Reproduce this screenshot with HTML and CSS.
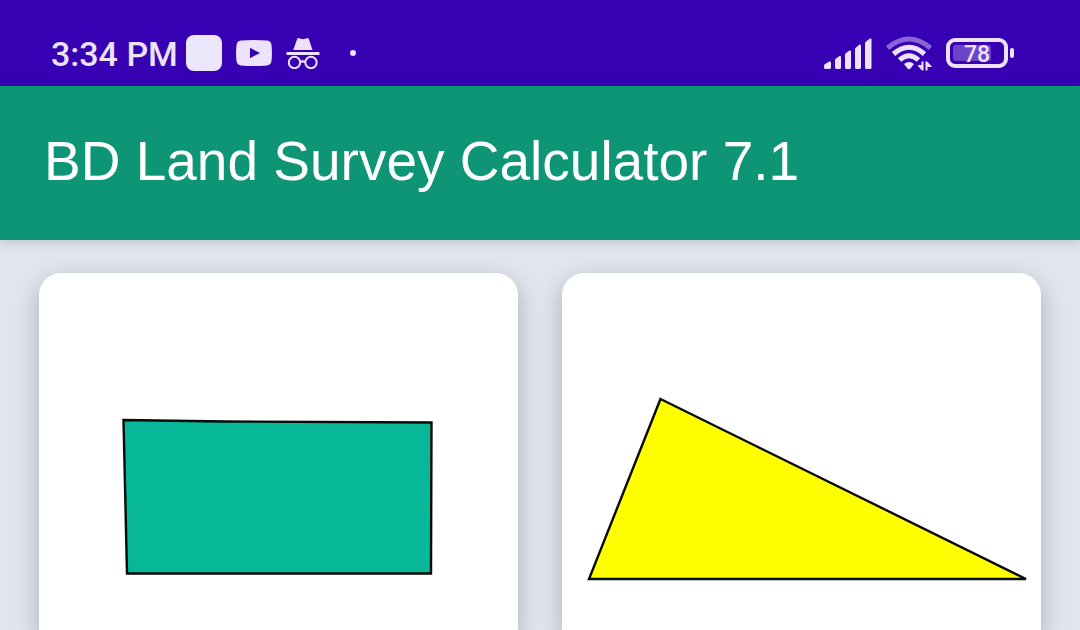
FILE: index.html
```html
<!DOCTYPE html>
<html lang="en">
<head>
<meta charset="utf-8">
<meta name="viewport" content="width=device-width, initial-scale=1">
<title>BD Land Survey Calculator</title>
<link rel="stylesheet" href="styles.css">
</head>
<body>
<div class="status-bar">
  <div class="status-left">
    <time class="clock">3:34 PM</time>
    <div class="notifications">
      <span class="app-tile"></span>
      <svg class="icon" width="36" height="26" viewBox="0 0 36 26" aria-hidden="true">
        <path fill-rule="evenodd" d="M5 .6Q18-.5 31 .6Q35 1 35.500 5Q36.400 13 35.500 21Q35 25 31 25.400Q18 26.500 5 25.400Q1 25 .5 21Q-.4 13 .5 5Q1 1 5 .6ZM14 7.800V18.200L24 13Z"/>
      </svg>
      <svg class="icon" width="34" height="32" viewBox="0 0 34 32" aria-hidden="true">
        <path d="M11 2.500Q11.500 .8 13 1.200L17 2.200L21 1.200Q22.500 .8 23 2.500L26.500 13H7.200Z"/>
        <path d="M.5 15H33.500V18H.5Z"/>
        <g class="line"><circle cx="8.500" cy="25.500" r="5.700"/><circle cx="25" cy="25.500" r="5.700"/><path d="M14 25.500Q16.700 23.200 19.500 25.500"/></g>
      </svg>
      <span class="more-dot"></span>
    </div>
  </div>
  <div class="status-right">
    <svg class="icon" width="48" height="32" viewBox="0 0 48 32" aria-hidden="true">
      <path d="M0 28.500Q0 27.500 1 27L5.500 24.500Q7 24 7 25.500V30.500Q7 32 5.500 32H1.500Q0 32 0 30.500ZM11 23Q11 22 12 21.500L15.500 19Q17 18.500 17 20V30.500Q17 32 15.500 32H12.500Q11 32 11 30.500ZM21 17.500Q21 16.500 22 16L25.500 13.500Q27 13 27 14.500V30.500Q27 32 25.500 32H22.500Q21 32 21 30.500ZM31 12Q31 11 32 10.500L35.500 7.500Q37 7 37 8.500V30.500Q37 32 35.500 32H32.500Q31 32 31 30.500ZM41 6Q41 5 42 4.500L46 1.500Q47.500 1 47.500 2.500V30.500Q47.500 32 46 32H42.500Q41 32 41 30.500Z"/>
    </svg>
    <svg class="icon" width="46" height="36" viewBox="0 0 46 36" aria-hidden="true">
      <g class="arc"><path class="dim" d="M1.500 13Q23-5 44.500 13"/><path d="M7.500 19Q23 5.500 38.500 19"/><path d="M13.500 25Q23 16.500 32.500 25"/></g>
      <path d="M18 29Q23 25 28 29L24.500 33.500Q23 35 21.500 33.500Z"/>
      <path d="M35.500 26.500H37.500V35.500H36L32 31V30H35.500ZM39.500 35.500V26.500H41L45.500 31V32H41.500V35.500Z"/>
    </svg>
    <svg class="icon" width="68" height="32" viewBox="0 0 68 32" role="img" aria-label="Battery 78 percent">
      <rect class="charge" x="7" y="8" width="38" height="16" rx="3"/>
      <rect class="battery-case" x="2" y="3" width="58" height="26" rx="7"/>
      <rect x="64" y="11" width="4" height="10" rx="2"/>
      <text class="battery-level" x="31" y="25" text-anchor="middle">78</text>
    </svg>
  </div>
</div>
<header class="app-bar">
  <h1 class="app-title">BD Land Survey Calculator 7.1</h1>
</header>
<main class="shape-grid">
  <a class="card" href="#quadrilateral" aria-label="Quadrilateral">
    <svg class="shape" viewBox="0 0 479 357" aria-hidden="true">
      <path class="quad" stroke-width="2.400" d="M84.500 147L186 148.500L392.500 149.500L392 300.500H88Z"/>
    </svg>
  </a>
  <a class="card" href="#triangle" aria-label="Triangle">
    <svg class="shape" viewBox="0 0 479 357" aria-hidden="true">
      <path class="triangle" stroke-width="2.400" d="M98.500 126L464 306H27Z"/>
    </svg>
  </a>
</main>
</body>
</html>
```
FILE: styles.css
```css
* {
  box-sizing: border-box;
}

body {
  margin: 0;
  min-height: 100vh;
  display: flex;
  flex-direction: column;
  background: #e0e5ee;
  font-family: "Liberation Sans", Arial, sans-serif;
}

.status-bar {
  display: flex;
  justify-content: space-between;
  align-items: center;
  padding: 20px 66px 0 51px;
  min-height: 86px;
  background: #3700b3;
  color: #ece2fc;
}

.status-left,
.status-right,
.notifications {
  display: flex;
  align-items: center;
}

.status-left {
  gap: 8px;
}

.status-right,
.notifications {
  gap: 14px;
}

.clock {
  padding-top: 2px;
  font: 500 34px/40px Roboto, sans-serif;
}

.app-tile {
  width: 36px;
  height: 36px;
  border-radius: 8px;
  background: #ece6fa;
}

.more-dot {
  width: 6px;
  height: 6px;
  margin-left: 16px;
  border-radius: 50%;
  background: currentColor;
}

.icon {
  display: block;
  fill: currentColor;
}

.line {
  fill: none;
  stroke: currentColor;
  stroke-width: 2;
}

.arc {
  fill: none;
  stroke: currentColor;
  stroke-width: 5;
}

.dim {
  opacity: 0.45;
}

.charge {
  opacity: 0.3;
}

.battery-case {
  fill: none;
  stroke: currentColor;
  stroke-width: 4;
}

.battery-level {
  font: 500 23px Roboto, sans-serif;
}

.app-bar {
  padding: 43px 44px 47px;
  background: #0d9576;
  box-shadow: 0 2px 10px rgba(0, 0, 0, 0.16);
}

.app-title {
  margin: 0;
  color: #fff;
  font-size: 55px;
  font-weight: 400;
  line-height: 64px;
}

.shape-grid {
  flex: 1;
  display: grid;
  grid-template-columns: 1fr 1fr;
  gap: 44px;
  padding: 33px 39px 0;
  overflow: hidden;
}

.card {
  border-radius: 22px 22px 0 0;
  background: #fff;
  box-shadow: 0 8px 24px rgba(0, 0, 0, 0.24);
}

.shape {
  display: block;
  width: 100%;
}

.quad,
.triangle {
  stroke: #080c08;
}

.quad {
  fill: #06b798;
}

.triangle {
  fill: #ff0;
}
```
